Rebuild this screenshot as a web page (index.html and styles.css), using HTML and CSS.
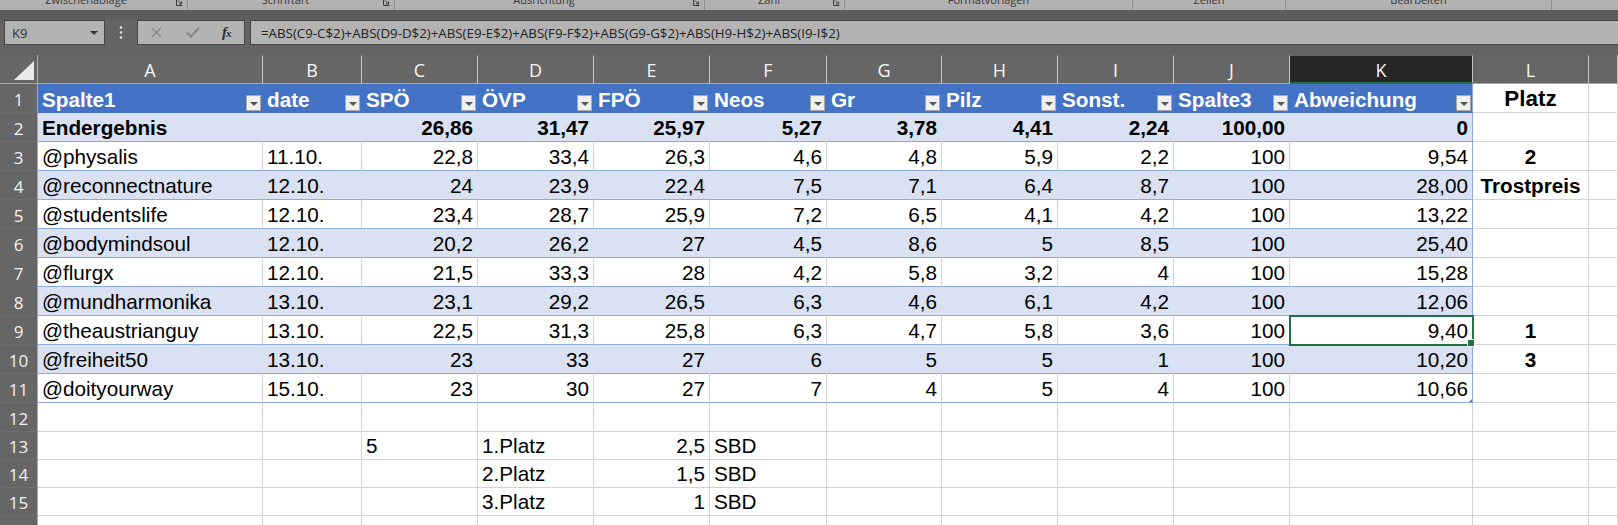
FILE: index.html
```html
<!DOCTYPE html>
<html lang="de">
<head>
<meta charset="utf-8">
<title>Excel</title>
<link rel="stylesheet" href="styles.css">
</head>
<body>
<div class="app">
  <div class="ribbon">
    <div class="grp g1"><span class="lbl">Zwischenablage</span><svg class="launch" width="7" height="6" viewBox="0 0 7 6"><path d="M0.5 0V5.5H6.5" fill="none" stroke="#3c3c3c"/><path d="M2 0.5L5.5 4M5.5 1.5V4H3" fill="none" stroke="#3c3c3c"/></svg></div>
    <div class="grp g2"><span class="lbl">Schriftart</span><svg class="launch" width="7" height="6" viewBox="0 0 7 6"><path d="M0.5 0V5.5H6.5" fill="none" stroke="#3c3c3c"/><path d="M2 0.5L5.5 4M5.5 1.5V4H3" fill="none" stroke="#3c3c3c"/></svg></div>
    <div class="grp g3"><span class="lbl">Ausrichtung</span><svg class="launch" width="7" height="6" viewBox="0 0 7 6"><path d="M0.5 0V5.5H6.5" fill="none" stroke="#3c3c3c"/><path d="M2 0.5L5.5 4M5.5 1.5V4H3" fill="none" stroke="#3c3c3c"/></svg></div>
    <div class="grp g4"><span class="lbl">Zahl</span><svg class="launch" width="7" height="6" viewBox="0 0 7 6"><path d="M0.5 0V5.5H6.5" fill="none" stroke="#3c3c3c"/><path d="M2 0.5L5.5 4M5.5 1.5V4H3" fill="none" stroke="#3c3c3c"/></svg></div>
    <div class="grp g5"><span class="lbl">Formatvorlagen</span></div>
    <div class="grp g6"><span class="lbl">Zellen</span></div>
    <div class="grp g7"><span class="lbl">Bearbeiten</span></div>
    <div class="grp g8"></div>
  </div>
  <div class="gap1"></div>
  <div class="fbar">
    <div class="namebox"><span>K9</span><span class="dd"></span></div>
    <div class="dots"><svg width="4" height="13" viewBox="0 0 4 13"><circle cx="2" cy="1.5" r="1.3" fill="#e4e4e4"/><circle cx="2" cy="6.5" r="1.3" fill="#e4e4e4"/><circle cx="2" cy="11.5" r="1.3" fill="#e4e4e4"/></svg></div>
    <div class="fnbox">
      <svg class="ico-x" width="11" height="11" viewBox="0 0 11 11"><path d="M1 1L10 10M10 1L1 10" stroke="#868686" stroke-width="1.4" fill="none"/></svg>
      <svg class="ico-ok" width="14" height="11" viewBox="0 0 14 11"><path d="M1 5.5L5 9.5L13 1" stroke="#868686" stroke-width="2" fill="none"/></svg>
      <span class="fx">f<span class="fxx">x</span></span>
    </div>
    <div class="formula">=ABS(C9-C$2)+ABS(D9-D$2)+ABS(E9-E$2)+ABS(F9-F$2)+ABS(G9-G$2)+ABS(H9-H$2)+ABS(I9-I$2)</div>
  </div>
  <div class="gap2"></div>

  <div class="sheet">
    <div class="row">
      <div class="corner"><span class="tri"></span></div>
      <div class="ch">A</div><div class="ch">B</div><div class="ch">C</div><div class="ch">D</div><div class="ch">E</div><div class="ch">F</div><div class="ch">G</div><div class="ch">H</div><div class="ch">I</div><div class="ch">J</div><div class="ch act">K</div><div class="ch">L</div><div class="ch"></div>
    </div>

    <div class="row">
      <div class="rh">1</div>
      <div class="c th"><span>Spalte1</span><i class="fb"></i></div>
      <div class="c th"><span>date</span><i class="fb"></i></div>
      <div class="c th"><span>SPÖ</span><i class="fb"></i></div>
      <div class="c th"><span>ÖVP</span><i class="fb"></i></div>
      <div class="c th"><span>FPÖ</span><i class="fb"></i></div>
      <div class="c th"><span>Neos</span><i class="fb"></i></div>
      <div class="c th"><span>Gr</span><i class="fb"></i></div>
      <div class="c th"><span>Pilz</span><i class="fb"></i></div>
      <div class="c th"><span>Sonst.</span><i class="fb"></i></div>
      <div class="c th"><span>Spalte3</span><i class="fb"></i></div>
      <div class="c th ke"><span>Abweichung</span><i class="fb"></i></div>
      <div class="c ctr b big">Platz</div>
      <div class="c"></div>
    </div>

    <div class="row bd b">
      <div class="rh">2</div>
      <div class="c t">Endergebnis</div><div class="c t"></div>
      <div class="c t n">26,86</div><div class="c t n">31,47</div><div class="c t n">25,97</div><div class="c t n">5,27</div><div class="c t n">3,78</div><div class="c t n">4,41</div><div class="c t n">2,24</div><div class="c t n">100,00</div><div class="c t n ke">0</div>
      <div class="c"></div><div class="c"></div>
    </div>

    <div class="row wt">
      <div class="rh">3</div>
      <div class="c t">@physalis</div><div class="c t">11.10.</div>
      <div class="c t n">22,8</div><div class="c t n">33,4</div><div class="c t n">26,3</div><div class="c t n">4,6</div><div class="c t n">4,8</div><div class="c t n">5,9</div><div class="c t n">2,2</div><div class="c t n">100</div><div class="c t n ke">9,54</div>
      <div class="c ctr b">2</div><div class="c"></div>
    </div>

    <div class="row bd">
      <div class="rh">4</div>
      <div class="c t">@reconnectnature</div><div class="c t">12.10.</div>
      <div class="c t n">24</div><div class="c t n">23,9</div><div class="c t n">22,4</div><div class="c t n">7,5</div><div class="c t n">7,1</div><div class="c t n">6,4</div><div class="c t n">8,7</div><div class="c t n">100</div><div class="c t n ke">28,00</div>
      <div class="c ctr b">Trostpreis</div><div class="c"></div>
    </div>

    <div class="row wt">
      <div class="rh">5</div>
      <div class="c t">@studentslife</div><div class="c t">12.10.</div>
      <div class="c t n">23,4</div><div class="c t n">28,7</div><div class="c t n">25,9</div><div class="c t n">7,2</div><div class="c t n">6,5</div><div class="c t n">4,1</div><div class="c t n">4,2</div><div class="c t n">100</div><div class="c t n ke">13,22</div>
      <div class="c"></div><div class="c"></div>
    </div>

    <div class="row bd">
      <div class="rh">6</div>
      <div class="c t">@bodymindsoul</div><div class="c t">12.10.</div>
      <div class="c t n">20,2</div><div class="c t n">26,2</div><div class="c t n">27</div><div class="c t n">4,5</div><div class="c t n">8,6</div><div class="c t n">5</div><div class="c t n">8,5</div><div class="c t n">100</div><div class="c t n ke">25,40</div>
      <div class="c"></div><div class="c"></div>
    </div>

    <div class="row wt">
      <div class="rh">7</div>
      <div class="c t">@flurgx</div><div class="c t">12.10.</div>
      <div class="c t n">21,5</div><div class="c t n">33,3</div><div class="c t n">28</div><div class="c t n">4,2</div><div class="c t n">5,8</div><div class="c t n">3,2</div><div class="c t n">4</div><div class="c t n">100</div><div class="c t n ke">15,28</div>
      <div class="c"></div><div class="c"></div>
    </div>

    <div class="row bd">
      <div class="rh">8</div>
      <div class="c t">@mundharmonika</div><div class="c t">13.10.</div>
      <div class="c t n">23,1</div><div class="c t n">29,2</div><div class="c t n">26,5</div><div class="c t n">6,3</div><div class="c t n">4,6</div><div class="c t n">6,1</div><div class="c t n">4,2</div><div class="c t n">100</div><div class="c t n ke">12,06</div>
      <div class="c"></div><div class="c"></div>
    </div>

    <div class="row wt">
      <div class="rh">9</div>
      <div class="c t">@theaustrianguy</div><div class="c t">13.10.</div>
      <div class="c t n">22,5</div><div class="c t n">31,3</div><div class="c t n">25,8</div><div class="c t n">6,3</div><div class="c t n">4,7</div><div class="c t n">5,8</div><div class="c t n">3,6</div><div class="c t n">100</div><div class="c t n ke sel">9,40</div>
      <div class="c ctr b">1</div><div class="c"></div>
    </div>

    <div class="row bd">
      <div class="rh">10</div>
      <div class="c t">@freiheit50</div><div class="c t">13.10.</div>
      <div class="c t n">23</div><div class="c t n">33</div><div class="c t n">27</div><div class="c t n">6</div><div class="c t n">5</div><div class="c t n">5</div><div class="c t n">1</div><div class="c t n">100</div><div class="c t n ke">10,20</div>
      <div class="c ctr b">3</div><div class="c"></div>
    </div>

    <div class="row wt">
      <div class="rh">11</div>
      <div class="c t">@doityourway</div><div class="c t">15.10.</div>
      <div class="c t n">23</div><div class="c t n">30</div><div class="c t n">27</div><div class="c t n">7</div><div class="c t n">4</div><div class="c t n">5</div><div class="c t n">4</div><div class="c t n">100</div><div class="c t n ke grip">10,66</div>
      <div class="c"></div><div class="c"></div>
    </div>

    <div class="row">
      <div class="rh">12</div>
      <div class="c"></div><div class="c"></div><div class="c"></div><div class="c"></div><div class="c"></div><div class="c"></div><div class="c"></div><div class="c"></div><div class="c"></div><div class="c"></div><div class="c"></div><div class="c"></div><div class="c"></div>
    </div>

    <div class="row">
      <div class="rh">13</div>
      <div class="c"></div><div class="c"></div><div class="c">5</div><div class="c">1.Platz</div><div class="c n">2,5</div><div class="c">SBD</div><div class="c"></div><div class="c"></div><div class="c"></div><div class="c"></div><div class="c"></div><div class="c"></div><div class="c"></div>
    </div>

    <div class="row">
      <div class="rh">14</div>
      <div class="c"></div><div class="c"></div><div class="c"></div><div class="c">2.Platz</div><div class="c n">1,5</div><div class="c">SBD</div><div class="c"></div><div class="c"></div><div class="c"></div><div class="c"></div><div class="c"></div><div class="c"></div><div class="c"></div>
    </div>

    <div class="row">
      <div class="rh">15</div>
      <div class="c"></div><div class="c"></div><div class="c"></div><div class="c">3.Platz</div><div class="c n">1</div><div class="c">SBD</div><div class="c"></div><div class="c"></div><div class="c"></div><div class="c"></div><div class="c"></div><div class="c"></div><div class="c"></div>
    </div>

    <div class="row">
      <div class="rh">16</div>
      <div class="c"></div><div class="c"></div><div class="c"></div><div class="c"></div><div class="c"></div><div class="c"></div><div class="c"></div><div class="c"></div><div class="c"></div><div class="c"></div><div class="c"></div><div class="c"></div><div class="c"></div>
    </div>
  </div>
</div>
</body>
</html>
```

FILE: styles.css
```css
* { box-sizing: border-box; }
html, body { margin: 0; padding: 0; }
body { background: #646464; }

.app {
  width: 1618px;
  height: 525px;
  overflow: hidden;
  background: #646464;
}

/* ribbon bottom strip */
.ribbon {
  display: flex;
  height: 10px;
  background: #b1b1b1;
  overflow: hidden;
}
.grp {
  display: flex;
  align-items: flex-start;
  border-right: 1px solid #8e8e8e;
  flex: none;
}
.g1 { width: 188px; }
.g2 { width: 207px; }
.g3 { width: 310px; }
.g4 { width: 140px; }
.g5 { width: 288px; }
.g6 { width: 153px; }
.g7 { width: 266px; }
.g8 { flex: 1; border-right: none; }
.lbl {
  flex: 1;
  text-align: center;
  font: 11px/16px "Open Sans", "Noto Sans", sans-serif;
  color: #3a3a3a;
  margin-top: -8px;
  white-space: nowrap;
}
.launch { flex: none; margin: 0 4px 0 0; }
.g1 .lbl { margin-right: 4px; }

.gap1 { height: 10px; background: #5d5d5d; }

/* formula bar */
.fbar {
  display: flex;
  height: 25px;
  padding-left: 4px;
  background: #646464;
}
.namebox {
  width: 101px;
  background: #b3b3b3;
  border: 1px solid #464646;
  display: flex;
  align-items: center;
  justify-content: space-between;
  padding: 0 6px 0 7px;
  font: 13px "Open Sans", "Noto Sans", sans-serif;
  color: #333;
}
.dd {
  width: 0; height: 0;
  border-left: 4px solid transparent;
  border-right: 4px solid transparent;
  border-top: 4px solid #383838;
}
.dots {
  width: 32px;
  display: flex;
  align-items: center;
  justify-content: center;
}
.fnbox {
  width: 108px;
  background: #b3b3b3;
  border: 1px solid #464646;
  display: flex;
  align-items: center;
  padding-left: 13px;
}
.ico-x { margin-right: 24px; }
.ico-ok { margin-right: 22px; }
.fx {
  font: italic bold 15px "Liberation Serif", serif;
  color: #2e2e2e;
  letter-spacing: -1px;
}
.fxx { font-size: 11px; }
.formula {
  flex: 1;
  margin-left: 5px;
  background: #b3b3b3;
  border: 1px solid #464646;
  border-right: none;
  display: flex;
  align-items: center;
  padding-left: 10px;
  font: 13.3px "Open Sans", "Noto Sans", sans-serif;
  color: #222;
  white-space: nowrap;
}
.gap2 { height: 10px; background: #646464; }

/* sheet grid */
.sheet {
  display: grid;
  grid-template-columns: 38px 225px 99px 116px 116px 116px 117px 115px 116px 116px 116px 183px 116px 29px;
  grid-template-rows: repeat(13, 29px) repeat(4, 28px);
  background: #fff;
}
.row { display: contents; }

.corner {
  background: #666;
  border-right: 1px solid #a8a8a8;
  border-bottom: 1px solid #a9a9a9;
  display: flex;
  align-items: flex-end;
  justify-content: flex-end;
  padding: 0 3px 3px 0;
}
.tri {
  width: 0; height: 0;
  border-left: 20px solid transparent;
  border-bottom: 19px solid #e9e9e9;
}
.ch {
  background: #666;
  color: #f7f7f7;
  border-right: 1px solid #c6c6c6;
  border-bottom: 1px solid #a9a9a9;
  border-top: 1px solid #666;
  display: flex;
  align-items: center;
  justify-content: center;
  font: 18px "Open Sans", "Noto Sans", sans-serif;
  padding-top: 1px;
}
.ch.act {
  background: #262626;
  border-bottom: 2px solid #217346;
}
.rh {
  background: #666;
  color: #f2f2f2;
  border-right: 1px solid #a8a8a8;
  border-bottom: 1px solid #6e6e6e;
  display: flex;
  align-items: center;
  justify-content: center;
  font: 17px "Open Sans", "Noto Sans", sans-serif;
  padding-top: 2px;
}

.c {
  background: #fff;
  border-right: 1px solid #d4d4d4;
  border-bottom: 1px solid #d4d4d4;
  display: flex;
  align-items: flex-end;
  padding: 0 4px 2px 4px;
  font: 20.7px/23px "Liberation Sans", Arial, sans-serif;
  color: #000;
  white-space: nowrap;
  overflow: hidden;
}
.n { justify-content: flex-end; }
.ctr { justify-content: center; }
.b, .b > .c { font-weight: bold; }
.big { font-size: 22.4px; }

.th {
  background: #4472c4;
  color: #fff;
  font-weight: bold;
  border-right-color: #4472c4;
  border-bottom-color: #4472c4;
  justify-content: space-between;
  padding: 0 1px 1px 4px;
}
.th.ke { border-right-color: #8ea9db; }
.fb {
  flex: none;
  width: 15px;
  height: 16px;
  background: #f0f0f0;
  border: 1px solid #a9a9a9;
  display: flex;
  align-items: center;
  justify-content: center;
  padding-top: 2px;
}
.fb::before {
  content: "";
  width: 0; height: 0;
  border-left: 4px solid transparent;
  border-right: 4px solid transparent;
  border-top: 4px solid #555;
}

.bd > .t {
  background: #d9e1f2;
  border-right-color: #d9e1f2;
  border-bottom-color: #8ea9db;
}
.wt > .t { border-bottom-color: #8ea9db; }
.t.ke { border-right-color: #8ea9db; }

.sel {
  position: relative;
  overflow: visible;
  z-index: 2;
  outline: 2px solid #217346;
  outline-offset: -1px;
}
.sel::after {
  content: "";
  position: absolute;
  right: -3px;
  bottom: -3px;
  width: 6px;
  height: 6px;
  background: #217346;
  border: 1px solid #fff;
}
.grip { position: relative; }
.grip::after {
  content: "";
  position: absolute;
  right: -1px;
  bottom: -1px;
  width: 0; height: 0;
  border-left: 5px solid transparent;
  border-bottom: 5px solid #4a6fc1;
}
```
